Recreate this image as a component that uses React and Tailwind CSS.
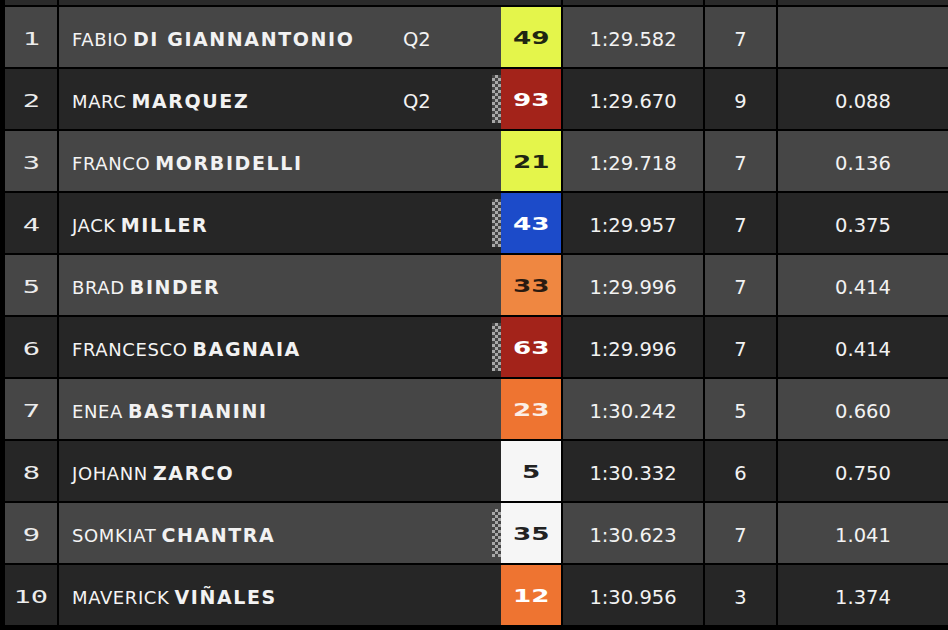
const ROWS = [
  { pos: "1", first: "FABIO", last: "DI GIANNANTONIO", q: "Q2", num: "49", box: "bg-[#e4f54b] text-[#1f2612]", time: "1:29.582", laps: "7", gap: "", flag: false },
  { pos: "2", first: "MARC", last: "MARQUEZ", q: "Q2", num: "93", box: "bg-[#a3231a] text-white", time: "1:29.670", laps: "9", gap: "0.088", flag: true },
  { pos: "3", first: "FRANCO", last: "MORBIDELLI", q: "", num: "21", box: "bg-[#e4f54b] text-[#1f2612]", time: "1:29.718", laps: "7", gap: "0.136", flag: false },
  { pos: "4", first: "JACK", last: "MILLER", q: "", num: "43", box: "bg-[#1c4bc9] text-white", time: "1:29.957", laps: "7", gap: "0.375", flag: true },
  { pos: "5", first: "BRAD", last: "BINDER", q: "", num: "33", box: "bg-[#ef8741] text-[#2a1a10]", time: "1:29.996", laps: "7", gap: "0.414", flag: false },
  { pos: "6", first: "FRANCESCO", last: "BAGNAIA", q: "", num: "63", box: "bg-[#a3231a] text-white", time: "1:29.996", laps: "7", gap: "0.414", flag: true },
  { pos: "7", first: "ENEA", last: "BASTIANINI", q: "", num: "23", box: "bg-[#ee7431] text-[#fbeee6]", time: "1:30.242", laps: "5", gap: "0.660", flag: false },
  { pos: "8", first: "JOHANN", last: "ZARCO", q: "", num: "5", box: "bg-[#f6f6f6] text-[#222222]", time: "1:30.332", laps: "6", gap: "0.750", flag: false },
  { pos: "9", first: "SOMKIAT", last: "CHANTRA", q: "", num: "35", box: "bg-[#f6f6f6] text-[#222222]", time: "1:30.623", laps: "7", gap: "1.041", flag: true },
  { pos: "10", first: "MAVERICK", last: "VIÑALES", q: "", num: "12", box: "bg-[#ee7431] text-white", time: "1:30.956", laps: "3", gap: "1.374", flag: false },
];

// Cells sit on a black sheet; the 2px gaps between them are the grid lines.
function Row({ row, light }) {
  const cell = light ? "bg-[#464646]" : "bg-[#262626]";
  return (
    <div className="flex gap-[2px] h-[60px] pl-[5px] text-[#f2f2f2] font-['DejaVu_Sans',sans-serif]">
      <div className={`${cell} w-[52px] flex items-center justify-center pt-[2px]`}>
        <span className="inline-block scale-x-[1.6] text-[18px] font-['DejaVu_Sans_Mono',monospace] text-[#ececec]">
          {row.pos}
        </span>
      </div>
      <div className="w-[502px] flex">
        <div className={`${cell} flex-1 flex items-center pl-[13px]`}>
          <div className="flex-1 pt-[4px] whitespace-nowrap">
            <span className="text-[18px] tracking-[0.6px] text-[#f4f4f4]">{row.first}</span>{" "}
            <span className="text-[19px] tracking-[1.6px] font-bold">{row.last}</span>
          </div>
          <div className="w-[89px] pt-[6px] text-[19.5px]">{row.q}</div>
          <div className="w-[9px] h-[48px]">
            {row.flag && (
              <div className="h-full w-full bg-[conic-gradient(#a8a8a8_25%,#444444_0_50%,#a8a8a8_0_75%,#444444_0)] bg-[length:6px_6px]" />
            )}
          </div>
        </div>
        <div className={`${row.box} w-[60px] flex items-center justify-center pt-[3px]`}>
          <span className="inline-block scale-x-[1.5] text-[17.5px] font-bold">{row.num}</span>
        </div>
      </div>
      <div className={`${cell} w-[140px] flex items-center justify-center pt-[6px] text-[19.5px]`}>
        {row.time}
      </div>
      <div className={`${cell} w-[71px] flex items-center justify-center pt-[6px] text-[19.5px]`}>
        {row.laps}
      </div>
      <div className={`${cell} flex-1 flex items-center justify-center pt-[6px] text-[19.5px]`}>
        {row.gap}
      </div>
    </div>
  );
}

export default function App() {
  return (
    <div className="w-[948px] h-[630px] overflow-hidden bg-black flex flex-col gap-[2px]">
      {/* tail of the row above, cut off by the crop */}
      <div className="flex gap-[2px] h-[5px] pl-[5px] shrink-0">
        <div className="bg-[#2a2a2a] w-[52px]" />
        <div className="bg-[#2a2a2a] w-[502px]" />
        <div className="bg-[#2a2a2a] w-[140px]" />
        <div className="bg-[#2a2a2a] w-[71px]" />
        <div className="bg-[#2a2a2a] flex-1" />
      </div>
      {ROWS.map((row, i) => (
        <Row key={row.pos} row={row} light={i % 2 === 0} />
      ))}
    </div>
  );
}
